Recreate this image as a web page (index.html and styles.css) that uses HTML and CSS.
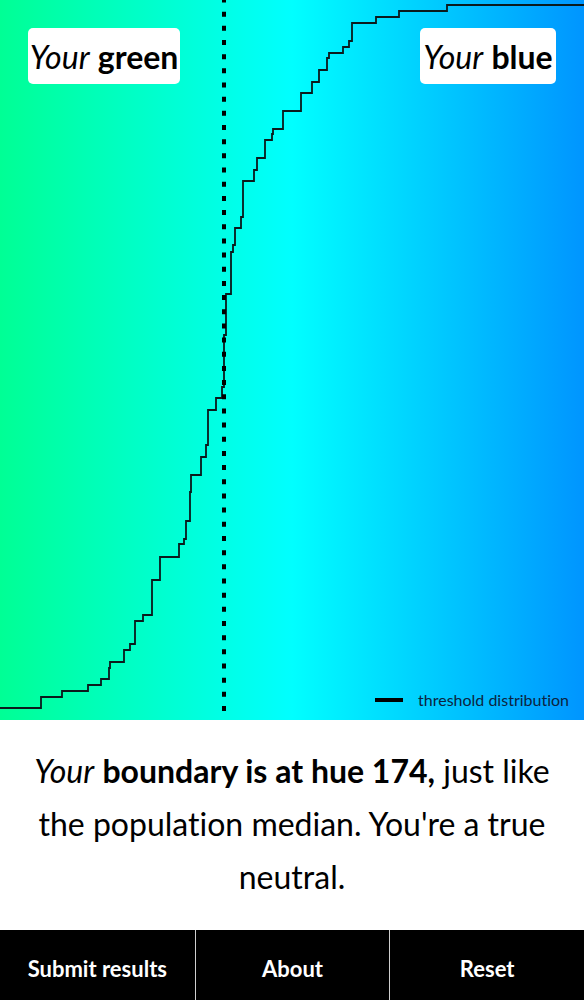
FILE: index.html
```html
<!DOCTYPE html>
<html lang="en">
<head>
<meta charset="utf-8">
<title>Your green, your blue</title>
<link rel="stylesheet" href="styles.css">
</head>
<body>
<div class="page">
  <section class="chart">
    <svg class="plot" width="584" height="720" viewBox="0 0 584 720">
      <path class="curve" d="M0 708 H41 V697 H62 V691 H88 V685 H101 V679 H109 V668 H110 V662 H124 V650 H130 V644 H135 V621 H143 V615 H152 V580 H160 V557 H179 V544 H184 V539 H186 V521 H190 V492 H191 V475 H201 V457 H206 V445 H208 V410 H216 V398 H222 V387 H224 V335 H226 V294 H231 V252 H233 V245 H235 V228 H241 V217 H243 V181 H254 V170 H257 V158 H265 V140 H272 V134 H273 V129 H283 V111 H301 V93 H312 V82 H319 V70 H327 V58 H329 V53 H343 V47 H349 V41 H352 V23 H376 V17 H399 V11 H447 V5 H584"/>
      <line class="marker" x1="224" y1="0" x2="224" y2="720"/>
    </svg>
    <div class="label label-green"><em>Your</em> <strong>green</strong></div>
    <div class="label label-blue"><em>Your</em> <strong>blue</strong></div>
    <div class="legend"><span class="legend-swatch"></span><span class="legend-text">threshold distribution</span></div>
  </section>
  <p class="result"><em>Your</em> <strong>boundary is at hue 174,</strong> just like the population median. You're a true neutral.</p>
  <nav class="actions">
    <button class="action">Submit results</button>
    <button class="action">About</button>
    <button class="action">Reset</button>
  </nav>
</div>
</body>
</html>
```

FILE: styles.css
```css
html, body {
  margin: 0;
  padding: 0;
  background: #ffffff;
}

body {
  font-family: "Lato", "Open Sans", "DejaVu Sans", sans-serif;
  font-variant-ligatures: none;
  color: #000;
}

.page {
  width: 584px;
  height: 1000px;
  display: flex;
  flex-direction: column;
}

.chart {
  position: relative;
  height: 720px;
  flex: none;
  background: linear-gradient(to right, #00ff95 0%, #00ffff 50%, #0095ff 100%);
}

.plot {
  display: block;
}

.curve {
  fill: none;
  stroke: #0b1a1c;
  stroke-width: 1.8;
}

.marker {
  stroke: #000;
  stroke-width: 4;
  stroke-dasharray: 5 9.17;
  stroke-dashoffset: 2.5;
}

.label {
  position: absolute;
  top: 28px;
  height: 56px;
  line-height: 58px;
  box-sizing: border-box;
  text-align: center;
  background: #fff;
  border-radius: 5px;
  font-size: 32px;
  white-space: nowrap;
  padding: 0;
}

.label em { font-style: italic; font-weight: 400; }
.label strong { font-weight: 700; }

.label-green {
  left: 28px;
  width: 152px;
}

.label-blue {
  right: 28px;
  width: 136px;
}

.legend {
  position: absolute;
  right: 15px;
  bottom: 11px;
  display: flex;
  align-items: center;
  gap: 15px;
}

.legend-swatch {
  width: 28px;
  height: 4px;
  background: #000;
}

.legend-text {
  font-size: 16px;
  color: #0c2440;
}

.result {
  flex: 1;
  margin: 0;
  padding: 24px 28px 0;
  text-align: center;
  font-size: 32px;
  line-height: 53px;
}

.result em { font-style: italic; }
.result strong { font-weight: 700; }

.actions {
  flex: none;
  height: 70px;
  display: grid;
  grid-template-columns: 1fr 1fr 1fr;
  background: #000;
}

.action {
  background: #000;
  color: #fff;
  border: 0;
  border-left: 1px solid #cfcfcf;
  font-family: inherit;
  font-size: 22px;
  font-weight: 700;
  padding: 6px 0 0;
  margin: 0;
}

.action:first-child {
  border-left: 0;
}
```
